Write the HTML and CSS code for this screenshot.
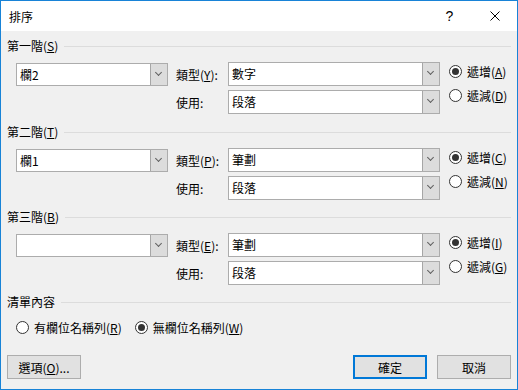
FILE: index.html
```html
<!DOCTYPE html>
<html lang="zh-Hant">
<head>
  <meta charset="UTF-8">
  <title>排序</title>
  <link rel="stylesheet" href="styles.css">
</head>
<body>
  <div class="window">
    <div class="titlebar">
      <span class="title">排序</span>
      <span class="cap-btn">?</span>
      <span class="cap-btn">
        <svg width="10" height="10" viewBox="0 0 10 10"><path d="M0.5 0.5L9.5 9.5M9.5 0.5L0.5 9.5" stroke="#000" stroke-width="1" fill="none"/></svg>
      </span>
    </div>

    <div class="content">
      <div class="section">
        <div class="group-head"><span>第一階(<u>S</u>)</span><span class="rule"></span></div>
        <div class="sort-row">
          <div class="combo key"><span class="val">欄2</span><span class="arrow"></span></div>
          <div class="fields">
            <div class="field"><label>類型(<u>Y</u>):</label><div class="combo wide"><span class="val">數字</span><span class="arrow"></span></div></div>
            <div class="field"><label>使用:</label><div class="combo wide"><span class="val">段落</span><span class="arrow"></span></div></div>
          </div>
          <div class="radios">
            <div class="radio on"><i></i>遞增(<u>A</u>)</div>
            <div class="radio"><i></i>遞減(<u>D</u>)</div>
          </div>
        </div>
      </div>

      <div class="section">
        <div class="group-head"><span>第二階(<u>T</u>)</span><span class="rule"></span></div>
        <div class="sort-row">
          <div class="combo key"><span class="val">欄1</span><span class="arrow"></span></div>
          <div class="fields">
            <div class="field"><label>類型(<u>P</u>):</label><div class="combo wide"><span class="val">筆劃</span><span class="arrow"></span></div></div>
            <div class="field"><label>使用:</label><div class="combo wide"><span class="val">段落</span><span class="arrow"></span></div></div>
          </div>
          <div class="radios">
            <div class="radio on"><i></i>遞增(<u>C</u>)</div>
            <div class="radio"><i></i>遞減(<u>N</u>)</div>
          </div>
        </div>
      </div>

      <div class="section">
        <div class="group-head"><span>第三階(<u>B</u>)</span><span class="rule"></span></div>
        <div class="sort-row">
          <div class="combo key"><span class="val"></span><span class="arrow"></span></div>
          <div class="fields">
            <div class="field"><label>類型(<u>E</u>):</label><div class="combo wide"><span class="val">筆劃</span><span class="arrow"></span></div></div>
            <div class="field"><label>使用:</label><div class="combo wide"><span class="val">段落</span><span class="arrow"></span></div></div>
          </div>
          <div class="radios">
            <div class="radio on"><i></i>遞增(<u>I</u>)</div>
            <div class="radio"><i></i>遞減(<u>G</u>)</div>
          </div>
        </div>
      </div>

      <div class="section">
        <div class="group-head"><span>清單內容</span><span class="rule"></span></div>
        <div class="list-row">
          <div class="radio"><i></i>有欄位名稱列(<u>R</u>)</div>
          <div class="radio on"><i></i>無欄位名稱列(<u>W</u>)</div>
        </div>
      </div>

      <div class="footer">
        <button class="btn">選項(<u>O</u>)...</button>
        <span class="spacer"></span>
        <button class="btn default">確定</button>
        <button class="btn">取消</button>
      </div>
    </div>
  </div>
</body>
</html>
```

FILE: styles.css
```css
* {
  box-sizing: border-box;
}
body {
  margin: 0;
  font-family: "Noto Sans CJK TC", "Noto Sans", sans-serif;
  font-size: 12px;
  color: #000;
  background: #fff;
}
u {
  text-decoration: underline;
  text-underline-offset: 1px;
}
.window {
  width: 518px;
  height: 390px;
  border: 1px solid #1883d7;
  display: flex;
  flex-direction: column;
}
.titlebar {
  height: 30px;
  background: #fff;
  display: flex;
  align-items: center;
}
.title {
  flex: 1;
  padding-left: 8px;
}
.cap-btn {
  width: 45px;
  height: 30px;
  display: flex;
  align-items: center;
  justify-content: center;
  font-family: "Liberation Sans", sans-serif;
  font-size: 14px;
}
.content {
  flex: 1;
  background: #f0f0f0;
  padding: 7px 6px 10px 6px;
  display: flex;
  flex-direction: column;
}
.section {
  margin-bottom: 9px;
}
.section:first-child {
  margin-bottom: 10px;
}
.group-head {
  height: 16px;
  display: flex;
  align-items: center;
  line-height: 16px;
}
.rule {
  flex: 1;
  height: 1px;
  background: #dcdcdc;
  margin-left: 6px;
}
.sort-row {
  margin-top: 8px;
  padding-left: 9px;
  display: flex;
  align-items: flex-start;
}
.combo {
  display: flex;
  background: #fff;
  border: 1px solid #acacac;
  height: 24px;
}
.combo.key {
  width: 152px;
  height: 23px;
  margin-top: 1px;
}
.combo.wide {
  width: 212px;
}
.val {
  flex: 1;
  padding-left: 3px;
  line-height: 21px;
}
.arrow {
  width: 17px;
  background: #dcdcdc;
  border-left: 1px solid #a6a6a6;
  position: relative;
}
.arrow::after {
  content: "";
  position: absolute;
  left: 5px;
  top: 6px;
  width: 4px;
  height: 4px;
  border-right: 1px solid #606060;
  border-bottom: 1px solid #606060;
  transform: rotate(45deg);
}
.fields {
  margin-left: 8px;
  display: flex;
  flex-direction: column;
  gap: 4px;
}
.field {
  display: flex;
  align-items: center;
}
.field label {
  width: 52px;
}
.radios {
  margin-left: 9px;
  padding-top: 1px;
  display: flex;
  flex-direction: column;
  gap: 8px;
}
.radio {
  height: 16px;
  display: flex;
  align-items: center;
  white-space: nowrap;
}
.radio i {
  width: 13px;
  height: 13px;
  border: 1px solid #333;
  border-radius: 50%;
  background: #fff;
  margin-right: 5px;
  display: flex;
  align-items: center;
  justify-content: center;
}
.radio.on i::after {
  content: "";
  width: 7px;
  height: 7px;
  border-radius: 50%;
  background: #333;
}
.list-row {
  margin-top: 9px;
  padding-left: 9px;
  display: flex;
  gap: 13px;
}
.footer {
  margin-top: auto;
  display: flex;
  gap: 10px;
}
.spacer {
  flex: 1;
}
.btn {
  width: 74px;
  height: 24px;
  background: #e1e1e1;
  border: 1px solid #adadad;
  font-family: inherit;
  font-size: 12px;
  color: #000;
  padding: 0;
}
.btn.default {
  border: 2px solid #0078d7;
}
```
